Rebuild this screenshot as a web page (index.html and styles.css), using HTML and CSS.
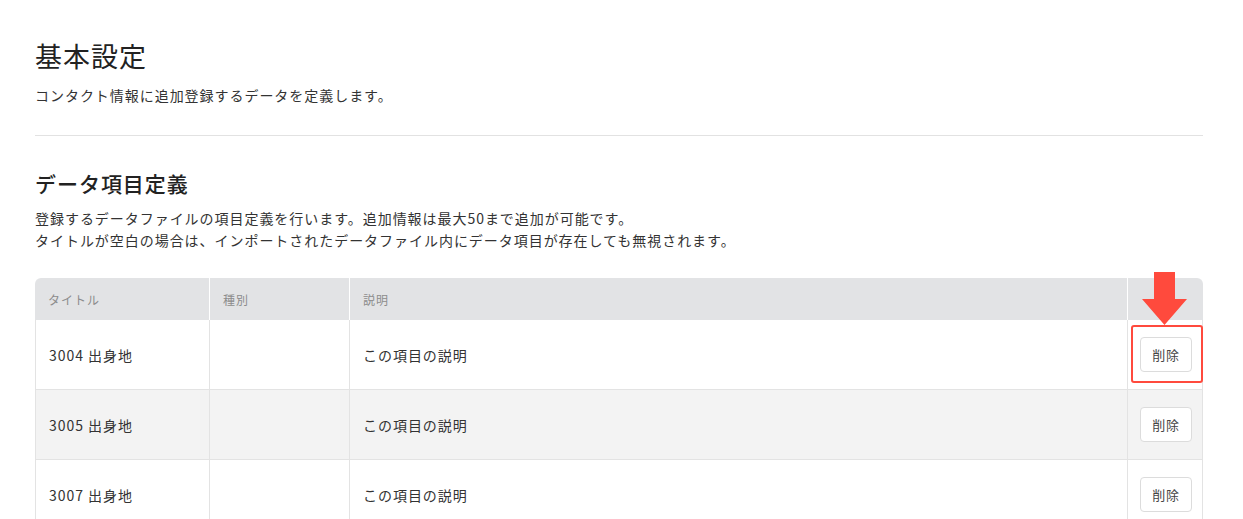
FILE: index.html
```html
<!DOCTYPE html>
<html lang="ja">
<head>
<meta charset="utf-8">
<title>基本設定</title>
<link rel="stylesheet" href="styles.css">
</head>
<body>
<main class="page">
  <header class="page-head">
    <h1 class="page-title">基本設定</h1>
    <p class="page-lead">コンタクト情報に追加登録するデータを定義します。</p>
  </header>
  <hr class="divider">
  <section class="section">
    <h2 class="section-title">データ項目定義</h2>
    <p class="section-desc">登録するデータファイルの項目定義を行います。追加情報は最大50まで追加が可能です。<br>タイトルが空白の場合は、インポートされたデータファイル内にデータ項目が存在しても無視されます。</p>
    <div class="table-wrap">
      <table class="items">
        <colgroup>
          <col class="c-title"><col class="c-type"><col class="c-desc"><col class="c-act">
        </colgroup>
        <thead>
          <tr><th>タイトル</th><th>種別</th><th>説明</th><th></th></tr>
        </thead>
        <tbody>
          <tr><td>3004 出身地</td><td></td><td>この項目の説明</td><td class="act"><button class="btn">削除</button></td></tr>
          <tr class="alt"><td>3005 出身地</td><td></td><td>この項目の説明</td><td class="act"><button class="btn">削除</button></td></tr>
          <tr><td>3007 出身地</td><td></td><td>この項目の説明</td><td class="act"><button class="btn">削除</button></td></tr>
        </tbody>
      </table>
      <svg class="anno-arrow" viewBox="0 0 45 53" width="45" height="53" aria-hidden="true">
        <polygon points="12,0 33,0 33,27 45,27 22.5,53 0,27 12,27" fill="#ff4a3d"/>
      </svg>
      <div class="anno-box"></div>
    </div>
  </section>
</main>
</body>
</html>
```

FILE: styles.css
```css
* { box-sizing: border-box; }

body {
  margin: 0;
  background: #ffffff;
  color: #333333;
  font-family: "Noto Sans CJK JP", "Noto Sans", sans-serif;
  letter-spacing: 0.06em;
}

.page {
  padding: 36px 40px 0 35px;
}

.page-title {
  margin: 0;
  font-size: 27px;
  line-height: 39px;
  font-weight: 400;
  color: #222222;
}

.page-lead {
  margin: 9px 0 0;
  font-size: 14px;
  line-height: 22px;
  color: #333333;
}

.divider {
  margin: 29px 0 0;
  border: 0;
  border-top: 1px solid #e2e2e2;
  height: 0;
}

.section-title {
  margin: 32px 0 0;
  font-size: 21px;
  line-height: 31px;
  font-weight: 500;
  color: #222222;
}

.section-desc {
  margin: 8px 0 0;
  font-size: 14px;
  line-height: 22px;
  color: #333333;
}

.table-wrap {
  position: relative;
  margin-top: 27px;
}

.items {
  width: 100%;
  border-collapse: separate;
  border-spacing: 0;
  table-layout: fixed;
  font-size: 14px;
}

.c-title { width: 175px; }
.c-type { width: 140px; }
.c-act { width: 75px; }

.items th {
  height: 42px;
  padding: 0 13px;
  text-align: left;
  font-weight: 400;
  font-size: 12px;
  color: #8c8c8c;
  background: #e2e3e5;
  border-right: 1px solid #ffffff;
}

.items th:first-child { border-top-left-radius: 6px; }
.items th:last-child { border-top-right-radius: 6px; border-right: 0; }

.items td {
  height: 70px;
  padding: 0 13px;
  color: #333333;
  border-right: 1px solid #e3e3e3;
  border-bottom: 1px solid #e3e3e3;
}

.items td:first-child { border-left: 1px solid #e3e3e3; }

.items tr.alt td { background: #f3f3f3; }

.items td.act {
  padding: 0;
  text-align: center;
}

.btn {
  width: 52px;
  height: 35px;
  margin-left: 2px;
  padding: 0;
  background: #ffffff;
  border: 1px solid #dcdcdc;
  border-radius: 4px;
  font-family: inherit;
  font-size: 13px;
  letter-spacing: 0.05em;
  color: #444444;
}

.anno-arrow {
  position: absolute;
  left: 1107px;
  top: -6px;
  display: block;
}

.anno-box {
  position: absolute;
  left: 1096px;
  top: 47px;
  width: 72px;
  height: 58px;
  border: 2px solid #ff4a3d;
  border-radius: 3px;
}
```
